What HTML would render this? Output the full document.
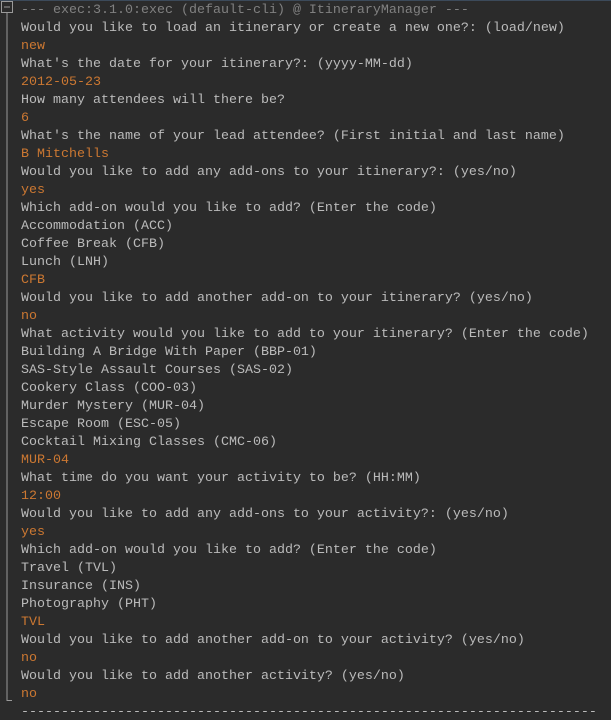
<!DOCTYPE html>
<html><head><meta charset="utf-8"><style>
html,body{margin:0;padding:0;background:#2b2b2b;width:611px;height:720px;overflow:hidden;position:relative}
.t{position:absolute;left:21px;top:2px;font-family:"Liberation Mono",monospace;font-size:13.33px;line-height:18px;color:#bbbbbb;white-space:pre}
.o{color:#cc7832}.g{color:#808080}
.top{position:absolute;left:0;top:0;width:611px;height:1px;background:#3c4a5a}
</style></head><body>
<div class="top"></div>
<svg style="position:absolute;left:0;top:0" width="20" height="720">
<rect x="1.5" y="1.5" width="11" height="11" fill="none" stroke="#9a9a9a"/>
<line x1="4" y1="7" x2="10" y2="7" stroke="#9a9a9a"/>
<line x1="7" y1="13" x2="7" y2="701" stroke="#9a9a9a"/>
<line x1="7" y1="700.5" x2="12" y2="700.5" stroke="#9a9a9a"/>
</svg>
<div class="t"><span class="g">--- exec:3.1.0:exec (default-cli) @ ItineraryManager ---</span>
Would you like to load an itinerary or create a new one?: (load/new)
<span class="o">new</span>
What's the date for your itinerary?: (yyyy-MM-dd)
<span class="o">2012-05-23</span>
How many attendees will there be?
<span class="o">6</span>
What's the name of your lead attendee? (First initial and last name)
<span class="o">B Mitchells</span>
Would you like to add any add-ons to your itinerary?: (yes/no)
<span class="o">yes</span>
Which add-on would you like to add? (Enter the code)
Accommodation (ACC)
Coffee Break (CFB)
Lunch (LNH)
<span class="o">CFB</span>
Would you like to add another add-on to your itinerary? (yes/no)
<span class="o">no</span>
What activity would you like to add to your itinerary? (Enter the code)
Building A Bridge With Paper (BBP-01)
SAS-Style Assault Courses (SAS-02)
Cookery Class (COO-03)
Murder Mystery (MUR-04)
Escape Room (ESC-05)
Cocktail Mixing Classes (CMC-06)
<span class="o">MUR-04</span>
What time do you want your activity to be? (HH:MM)
<span class="o">12:00</span>
Would you like to add any add-ons to your activity?: (yes/no)
<span class="o">yes</span>
Which add-on would you like to add? (Enter the code)
Travel (TVL)
Insurance (INS)
Photography (PHT)
<span class="o">TVL</span>
Would you like to add another add-on to your activity? (yes/no)
<span class="o">no</span>
Would you like to add another activity? (yes/no)
<span class="o">no</span>
------------------------------------------------------------------------</div>
</body></html>
